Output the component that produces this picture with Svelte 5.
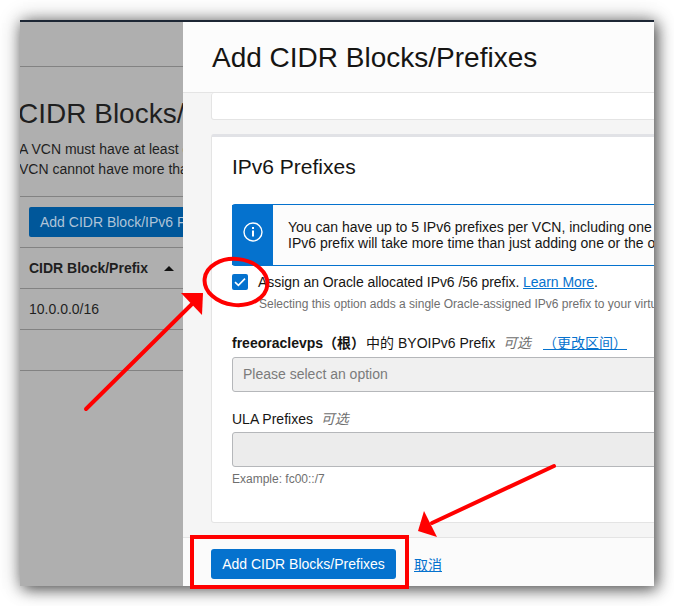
<script>
  let rows = ['10.0.0.0/16', ''];
</script>

<div class="stage">
  <div class="window">
    <aside class="behind">
      <div class="top-gap"></div>
      <h1>CIDR Blocks/Prefixes</h1>
      <p>A VCN must have at least one CIDR block.<br />VCN cannot have more than five.</p>
      <div class="toolbar">
        <span class="old-btn">Add CIDR Block/IPv6 Prefix</span>
      </div>
      <div class="th">CIDR Block/Prefix <i class="sort"></i></div>
      {#each rows as row}
        <div class="td">{row}</div>
      {/each}
    </aside>

    <section class="drawer">
      <header>
        <h2>Add CIDR Blocks/Prefixes</h2>
      </header>
      <div class="body">
        <div class="card stub"></div>
        <div class="card ipv6">
          <h3>IPv6 Prefixes</h3>
          <div class="notice">
            <div class="notice-icon">
              <svg width="20" height="20" viewBox="0 0 20 20" fill="none" stroke="#fff">
                <circle cx="10" cy="10" r="9" stroke-width="1.4" />
                <path d="M10 8.5v6" stroke-width="2" />
                <path d="M10 5v2" stroke-width="2" />
              </svg>
            </div>
            <div class="notice-text">
              You can have up to 5 IPv6 prefixes per VCN, including one Oracle allocated prefix. Adding a<br />
              IPv6 prefix will take more time than just adding one or the other to your VCN.
            </div>
          </div>
          <div class="check-row">
            <span class="check">
              <svg width="16" height="16" viewBox="0 0 16 16" fill="none" stroke="#fff" stroke-width="1.6">
                <path d="M3 8.2l3.4 3.2L13 4.6" />
              </svg>
            </span>
            <span class="assign">Assign an Oracle allocated IPv6 /56 prefix. <a href="#more">Learn More</a>.</span>
          </div>
          <div class="hint indent">Selecting this option adds a single Oracle-assigned IPv6 prefix to your virtual cloud network.</div>
          <div class="label byo">
            <b>freeoraclevps（根）</b>中的 BYOIPv6 Prefix
            <em>可选</em>
            <a class="change" href="#change">（更改区间）</a>
          </div>
          <div class="field select">Please select an option</div>
          <div class="label ula">ULA Prefixes <em>可选</em></div>
          <div class="field input"></div>
          <div class="hint example">Example: fc00::/7</div>
        </div>
      </div>
      <footer>
        <button>Add CIDR Blocks/Prefixes</button>
        <a href="#cancel">取消</a>
      </footer>
    </section>
  </div>

  <!-- hand drawn marks on top of the screenshot -->
  <svg class="marks" width="674" height="606" viewBox="0 0 674 606" fill="none">
    <g stroke="#f00" stroke-width="4">
      <ellipse cx="236" cy="282" rx="31.5" ry="23" transform="rotate(6 236 282)" />
      <path d="M86 409L192 304" stroke-linecap="round" />
      <path d="M554 466L432 523" stroke-linecap="round" />
      <rect x="192" y="537" width="215" height="50" />
    </g>
    <path d="M181 293L203 293L202 315Z" fill="#f00" />
    <path d="M424 511L418 531L437 537Z" fill="#f00" />
  </svg>
</div>

<style>
  :global(body) {
    background: #fff;
  }

  .stage {
    width: 674px;
    height: 606px;
    padding: 20px;
    box-sizing: border-box;
    position: relative;
    overflow: hidden;
    font-family: "Liberation Sans", "Noto Sans CJK SC", sans-serif;
  }

  .window {
    width: 634px;
    height: 566px;
    display: flex;
    border-top: 2px solid #1d2735;
    box-sizing: border-box;
    box-shadow: 3px 3px 14px rgba(0, 0, 0, 0.6), 0 0 20px rgba(0, 0, 0, 0.3);
    overflow: hidden;
  }

  .behind {
    width: 163px;
    flex: none;
    background: #afafaf;
    color: #1f1f1f;
    overflow: hidden;
    white-space: nowrap;
  }

  .top-gap {
    height: 44px;
    border-bottom: 1px solid #828282;
  }

  h1 {
    margin: 29px 0 0 -2px;
    font-size: 28px;
    font-weight: 400;
    line-height: 36px;
  }

  p {
    margin: 7px 0 0 -1px;
    font-size: 14px;
    line-height: 20px;
    height: 57px;
  }

  .toolbar {
    height: 52px;
    padding: 10px 0 0 9px;
    box-sizing: border-box;
    border-top: 1px solid #828282;
    border-bottom: 1px solid #828282;
  }

  .old-btn {
    display: block;
    width: 200px;
    height: 30px;
    padding-left: 11px;
    line-height: 30px;
    font-size: 14px;
    border-radius: 2px;
    background: #00579a;
    color: #afc4d8;
  }

  .th,
  .td {
    height: 41px;
    padding-left: 9px;
    box-sizing: border-box;
    display: flex;
    align-items: center;
    font-size: 14px;
    border-bottom: 1px solid #828282;
  }

  .th {
    font-weight: 700;
  }

  .sort {
    margin-left: 16px;
    border: 5px solid transparent;
    border-top: 0;
    border-bottom: 5px solid #111;
  }

  .drawer {
    flex: 1;
    min-width: 0;
    display: flex;
    flex-direction: column;
    background: #f5f5f5;
    overflow: hidden;
    white-space: nowrap;
    color: #161513;
  }

  header {
    height: 71px;
    flex: none;
    padding-left: 29px;
    background: #fcfcfc;
    border-bottom: 1px solid #e4e4e4;
    box-sizing: border-box;
  }

  h2 {
    margin: 0;
    font-size: 28px;
    font-weight: 400;
    line-height: 71px;
  }

  .body {
    flex: 1;
    min-height: 0;
    padding-left: 28px;
    overflow: hidden;
  }

  .card {
    width: 600px;
    box-sizing: border-box;
    background: #fff;
    border: 1px solid #e4e4e4;
    border-radius: 3px;
  }

  .stub {
    height: 27px;
    border-top: 0;
  }

  .ipv6 {
    height: 389px;
    margin-top: 14px;
    padding: 0 0 0 20px;
    border-top: 3px solid #e1e2e6;
  }

  h3 {
    margin: 0;
    padding-top: 16px;
    font-size: 21px;
    font-weight: 400;
    line-height: 28px;
  }

  .notice {
    margin-top: 23px;
    height: 62px;
    display: flex;
    border: 1px solid #0572ce;
    border-left: 0;
    border-radius: 3px 0 0 3px;
    box-sizing: border-box;
    background: #fcfcfc;
  }

  .notice-icon {
    width: 41px;
    flex: none;
    background: #0572ce;
    display: flex;
    align-items: center;
    justify-content: center;
    padding-bottom: 6px;
    box-sizing: border-box;
  }

  .notice-text {
    padding: 14px 0 0 15px;
    font-size: 14px;
    line-height: 16px;
  }

  .check-row {
    height: 32px;
    display: flex;
    align-items: center;
    gap: 10px;
    font-size: 14px;
  }

  .assign {
    letter-spacing: -0.06px;
  }

  .check {
    width: 16px;
    height: 16px;
    border-radius: 2px;
    background: #0572ce;
    display: block;
  }

  .check svg {
    display: block;
  }

  a {
    color: #0572ce;
  }

  .hint {
    font-size: 12px;
    line-height: 14px;
    color: #6f6f6f;
  }

  .indent {
    margin: -1px 0 0 27px;
  }

  .label {
    font-size: 14px;
    line-height: 16px;
  }

  .label b {
    margin-right: 1px;
  }

  .label em {
    margin-left: 4px;
    color: #6f6f6f;
  }

  .byo {
    margin-top: 24px;
  }

  .change {
    margin-left: 8px;
  }

  .field {
    height: 35px;
    box-sizing: border-box;
    border: 1px solid #b5b7ba;
    border-radius: 3px 0 0 3px;
  }

  .select {
    margin-top: 6px;
    background: #f0f0f0;
    padding-left: 10px;
    line-height: 33px;
    font-size: 14px;
    color: #7b7b7b;
  }

  .ula {
    margin-top: 19px;
  }

  .input {
    margin-top: 5px;
    background: #ececec;
  }

  .example {
    margin-top: 5px;
  }

  footer {
    height: 49px;
    flex: none;
    display: flex;
    align-items: center;
    gap: 18px;
    padding: 4px 0 0 28px;
    box-sizing: border-box;
    background: #fbfbfb;
    border-top: 1px solid #e4e4e4;
    font-size: 14px;
  }

  button {
    width: 185px;
    height: 30px;
    border: 0;
    border-radius: 3px;
    padding: 0;
    font-family: inherit;
    font-size: 14px;
    background: #0572ce;
    color: #fff;
  }

  .marks {
    position: absolute;
    left: 0;
    top: 0;
  }
</style>
